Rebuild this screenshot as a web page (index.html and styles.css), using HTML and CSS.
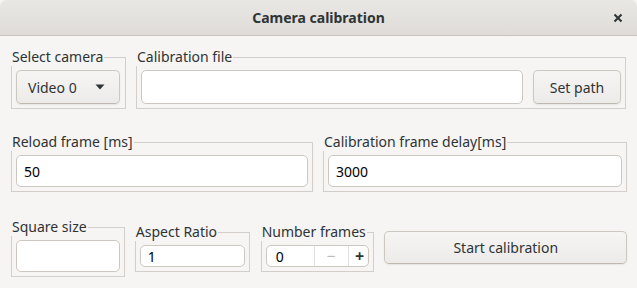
FILE: index.html
```html
<!DOCTYPE html>
<html lang="en">
<head>
  <meta charset="UTF-8" />
  <title>Camera calibration</title>
  <link rel="stylesheet" href="styles.css">
</head>
<body>

  <div class="window">

    <!-- Title bar -->
    <header class="titlebar">
      <span class="title">Camera calibration</span>
      <span class="close">
        <svg width="10" height="10" viewBox="0 0 10 10">
          <path d="M1.5 1.5 L8.5 8.5 M8.5 1.5 L1.5 8.5" stroke="#2e3436" stroke-width="2" fill="none"/>
        </svg>
      </span>
    </header>

    <main class="content">

      <div class="row row-source">
        <fieldset class="frame frame-camera">
          <legend>Select camera</legend>
          <button class="btn combo">
            <span>Video 0</span>
            <svg width="10" height="6" viewBox="0 0 10 6">
              <path d="M0.5 0.5 L9.5 0.5 L5 5.5 Z" fill="#2e3436"/>
            </svg>
          </button>
        </fieldset>

        <fieldset class="frame frame-file">
          <legend>Calibration file</legend>
          <div class="file-row">
            <input class="entry entry-tall" type="text" value="">
            <button class="btn btn-path">Set path</button>
          </div>
        </fieldset>
      </div>

      <div class="row row-timing">
        <fieldset class="frame frame-reload">
          <legend>Reload frame [ms]</legend>
          <input class="entry entry-mid" type="text" value="50">
        </fieldset>
        <fieldset class="frame frame-delay">
          <legend>Calibration frame delay[ms]</legend>
          <input class="entry entry-mid" type="text" value="3000">
        </fieldset>
      </div>

      <div class="row row-board">
        <fieldset class="frame frame-square">
          <legend>Square size</legend>
          <input class="entry entry-mid" type="text" value="">
        </fieldset>
        <fieldset class="frame frame-aspect">
          <legend>Aspect Ratio</legend>
          <input class="entry entry-flat" type="text" value="1">
        </fieldset>
        <fieldset class="frame frame-count">
          <legend>Number frames</legend>
          <div class="spin">
            <input class="spin-value" type="text" value="0">
            <span class="spin-btn spin-minus">&minus;</span>
            <span class="spin-btn spin-plus">+</span>
          </div>
        </fieldset>
        <button class="btn btn-start">Start calibration</button>
      </div>

    </main>
  </div>

</body>
</html>
```

FILE: styles.css
```css
* {
  box-sizing: border-box;
}

html,
body {
  margin: 0;
  background-color: #f6f5f4;
}

body {
  font-family: 'Noto Sans', 'DejaVu Sans', sans-serif;
  font-size: 14px;
  color: #2e3436;
}

.window {
  width: 637px;
  height: 288px;
  background-color: #f6f5f4;
  border-radius: 7px 7px 0 0;
  overflow: hidden;
}

/* Title bar */

.titlebar {
  height: 36px;
  display: flex;
  align-items: center;
  justify-content: center;
  position: relative;
  background: linear-gradient(to bottom, #e9e7e4, #dfdcd8);
  border-bottom: 1px solid #c8c2bc;
}

.title {
  font-weight: bold;
  font-size: 14px;
  color: #2e3436;
}

.close {
  position: absolute;
  right: 14px;
  top: 13px;
  width: 10px;
  height: 10px;
  display: flex;
}

/* Layout */

.content {
  padding: 12px 10px 0 11px;
}

.row {
  display: flex;
  gap: 10px;
}

.row-timing {
  margin-top: 24px;
}

.row-board {
  margin-top: 26px;
  align-items: center;
}

/* Frames */

.frame {
  margin: 0;
  padding: 4px;
  border: 1px solid #d3cec9;
  min-width: 0;
}

.frame legend {
  padding: 0 1px;
  margin-left: -5px;
  line-height: 18px;
  color: #2e3436;
  background-color: #f6f5f4;
}

.frame-camera {
  width: 115px;
}

.frame-file {
  width: 490px;
}

.frame-reload {
  width: 302px;
}

.frame-delay {
  width: 304px;
}

.frame-square {
  width: 114px;
}

.frame-aspect {
  width: 115px;
}

.frame-count {
  width: 114px;
  margin-left: 1px;
}

.file-row {
  display: flex;
  gap: 10px;
}

/* Entries */

.entry {
  display: block;
  width: 100%;
  border: 1px solid #cdc7c2;
  border-radius: 5px;
  background-color: #fff;
  font-family: inherit;
  font-size: 14px;
  color: #000;
  padding: 0 7px;
  outline: none;
}

.entry-tall {
  flex: 1;
  height: 34px;
}

.entry-mid {
  height: 32px;
}

.entry-flat {
  height: 22px;
}

/* Buttons */

.btn {
  font-family: inherit;
  font-size: 14px;
  color: #2e3436;
  border: 1px solid #cdc7c2;
  border-bottom-color: #bfb8b1;
  border-radius: 5px;
  background: linear-gradient(to bottom, #f6f5f4, #edebe9);
  box-shadow: 0 1px 2px rgba(0, 0, 0, 0.07);
  cursor: pointer;
}

.combo {
  width: 104px;
  height: 34px;
  display: flex;
  align-items: center;
  justify-content: space-between;
  padding: 0 14px 0 11px;
}

.btn-path {
  width: 88px;
  height: 34px;
}

.btn-start {
  width: 243px;
  height: 33px;
  margin-bottom: 1px;
}

/* Spin button */

.spin {
  display: flex;
  height: 22px;
  border: 1px solid #cdc7c2;
  border-radius: 5px;
  background-color: #fff;
  overflow: hidden;
}

.spin-value {
  width: 47px;
  border: none;
  padding: 0 0 0 9px;
  font-family: inherit;
  font-size: 14px;
  color: #000;
  outline: none;
  background: transparent;
}

.spin-btn {
  display: flex;
  align-items: center;
  justify-content: center;
  border-left: 1px solid #e4e0dd;
  font-size: 16px;
  line-height: 18px;
}

.spin-minus {
  width: 34px;
  color: #c0bbb7;
}

.spin-plus {
  flex: 1;
  padding-left: 2px;
  color: #2e3436;
  font-weight: bold;
}
```
